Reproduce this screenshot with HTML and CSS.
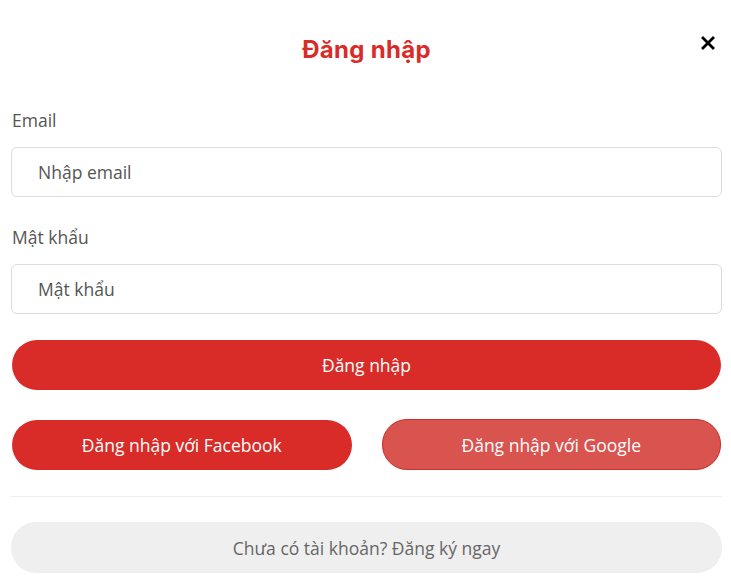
FILE: index.html
```html
<!DOCTYPE html>
<html lang="vi">
<head>
<meta charset="utf-8">
<link rel="stylesheet" href="styles.css">
</head>
<body>
<div class="modal">
  <div class="header">
    <h1 class="title">Đăng nhập</h1>
    <button class="close" aria-label="Đóng">
      <svg width="14" height="14" viewBox="0 0 14 14"><path d="M2 2 L12 12 M12 2 L2 12" stroke="#000" stroke-width="2.8" stroke-linecap="square"/></svg>
    </button>
  </div>
  <form class="form">
    <label class="label">Email</label>
    <input class="input" type="text" placeholder="Nhập email">
    <label class="label">Mật khẩu</label>
    <input class="input" type="password" placeholder="Mật khẩu">
    <button type="button" class="btn btn-primary">Đăng nhập</button>
    <div class="social">
      <button type="button" class="btn btn-primary">Đăng nhập với Facebook</button>
      <button type="button" class="btn btn-google">Đăng nhập với Google</button>
    </div>
    <hr class="divider">
    <button type="button" class="btn btn-light">Chưa có tài khoản? Đăng ký ngay</button>
  </form>
</div>
</body>
</html>
```

FILE: styles.css
```css
* { box-sizing: border-box; }
body {
  margin: 0;
  background: #fff;
  font-family: "Open Sans", "Liberation Sans", sans-serif;
  color: #555;
}
.modal {
  width: 731px;
  padding: 0 9px 0 11px;
}
.header {
  position: relative;
  height: 101px;
  display: flex;
  justify-content: center;
  align-items: flex-start;
}
.title {
  margin: 34px 0 0;
  font-family: "Inter", "Open Sans", sans-serif;
  font-weight: 700;
  font-size: 24px;
  color: #d92b27;
  line-height: 32px;
  letter-spacing: 0.3px;
}
.close {
  position: absolute;
  right: 7px;
  top: 36px;
  border: 0;
  background: none;
  padding: 0;
  width: 14px;
  height: 14px;
  cursor: pointer;
}
.close svg { display: block; }
.form {
  display: flex;
  flex-direction: column;
}
.label {
  font-size: 17.5px;
  line-height: 22px;
  color: #555;
  margin: 8px 0 16px 1px;
}
.input {
  height: 50px;
  border: 1px solid #dcdcdc;
  border-radius: 6px;
  padding: 0 26px;
  font-family: inherit;
  font-size: 17.5px;
  color: #555;
  margin-bottom: 21px;
}
.input::placeholder { color: #555; }
.btn {
  height: 50px;
  border-radius: 25px;
  border: 0;
  font-family: "Open Sans", sans-serif;
  font-size: 17.5px;
  font-weight: 500;
  color: #fff;
  cursor: pointer;
}
.form > .btn-primary { margin: 5px 1px 0 1px; }
.btn-primary { background: #d92b27; }
.btn-google {
  background: #d9534f;
  border: 1px solid #c9302c;
  height: 51px;
  margin-top: -1px;
}
.social {
  display: grid;
  grid-template-columns: 1fr 1fr;
  gap: 30px;
  margin: 30px 1px 0 1px;
  align-items: start;
}
.divider {
  border: 0;
  border-top: 1px solid #eee;
  margin: 26px 0 25px;
  width: 100%;
}
.btn-light {
  background: #efefef;
  color: #666;
  height: 51px;
  font-weight: 400;
}
```
